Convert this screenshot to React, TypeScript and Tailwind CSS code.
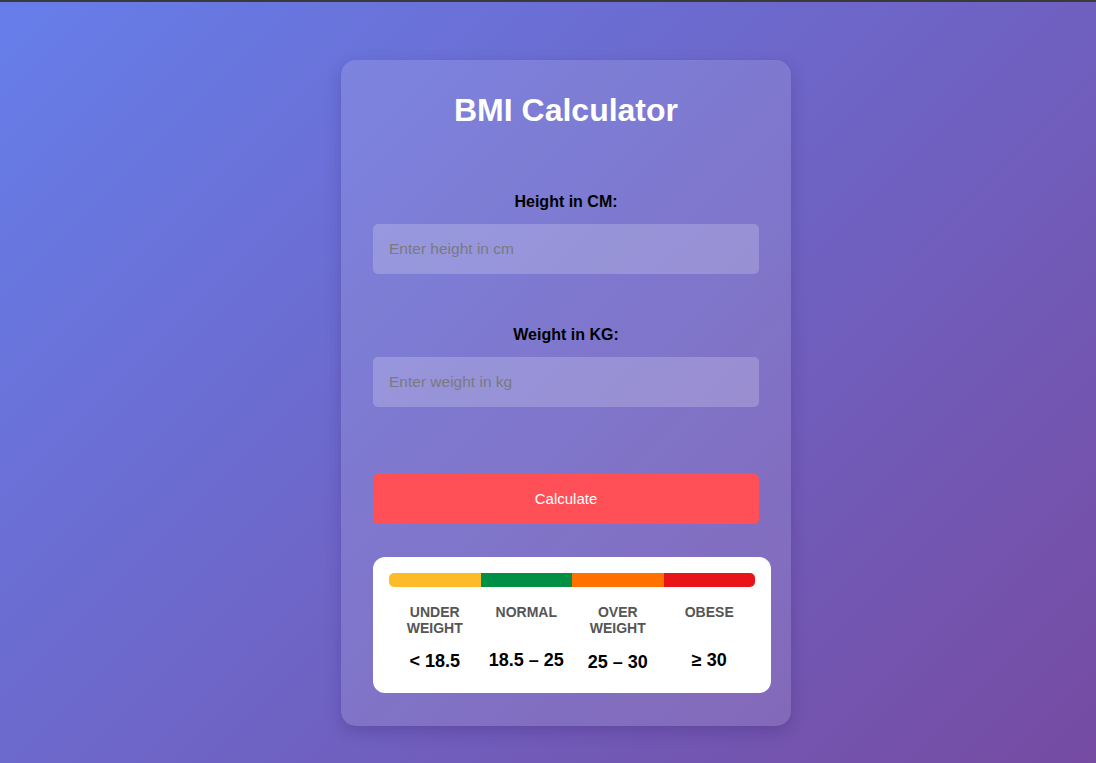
import React from "react";

const cats = [
  { label: ["UNDER", "WEIGHT"], value: "< 18.5", off: "mt-[1px]" },
  { label: ["NORMAL"], value: "18.5 – 25", off: "mt-0" },
  { label: ["OVER", "WEIGHT"], value: "25 – 30", off: "mt-[2px]" },
  { label: ["OBESE"], value: "≥ 30", off: "mt-0" },
];

export default function App() {
  return (
    <div className="w-[1096px] h-[763px] overflow-hidden flex flex-col font-['Liberation_Sans',Arial,sans-serif]">
      <div className="h-[2px] bg-[#3a3a3a] shrink-0" />
      <div className="flex-1 bg-[linear-gradient(135deg,#667eea_0%,#764ba2_100%)] flex justify-center pl-[36px]">
        <div className="mt-[58px] w-[450px] h-[666px] rounded-[15px] bg-white/[0.12] shadow-[0_6px_16px_rgba(40,20,90,0.22)] px-8 pt-8 flex flex-col">
          <h1 className="text-white text-[32px] font-bold leading-[37px] text-center">BMI Calculator</h1>

          <label className="mt-[64px] text-[16px] leading-[18px] font-bold text-black text-center">Height in CM:</label>
          <input
            className="mt-[13px] h-[50px] w-full rounded-[5px] bg-white/20 px-4 text-[15.5px] text-black placeholder:text-[#7a7a80] outline-none"
            placeholder="Enter height in cm"
          />

          <label className="mt-[52px] text-[16px] leading-[18px] font-bold text-black text-center">Weight in KG:</label>
          <input
            className="mt-[13px] h-[50px] w-full rounded-[5px] bg-white/20 px-4 text-[15.5px] text-black placeholder:text-[#7a7a80] outline-none"
            placeholder="Enter weight in kg"
          />

          <button className="mt-[67px] h-[50px] w-full rounded-[5px] bg-[#ff5057] text-white text-[15px]">Calculate</button>

          <div className="mt-[33px] w-[398px] h-[136px] rounded-[12px] bg-white px-4 pt-4">
            <div className="flex h-[14px] rounded-[5px] overflow-hidden">
              <div className="flex-1 bg-[#fdbb2a]" />
              <div className="flex-1 bg-[#009045]" />
              <div className="flex-1 bg-[#ff7200]" />
              <div className="flex-1 bg-[#e8141a]" />
            </div>
            <div className="grid grid-cols-4 mt-[17px]">
              {cats.map((c) => (
                <div key={c.value} className="flex flex-col items-center">
                  <div className="h-[32px] text-[14px] leading-[16px] font-bold text-[#555] text-center">
                    {c.label.map((l) => (
                      <div key={l}>{l}</div>
                    ))}
                  </div>
                  <div className={`${c.off} pt-[14px] text-[18px] leading-[21px] font-bold text-black`}>{c.value}</div>
                </div>
              ))}
            </div>
          </div>
        </div>
      </div>
    </div>
  );
}
